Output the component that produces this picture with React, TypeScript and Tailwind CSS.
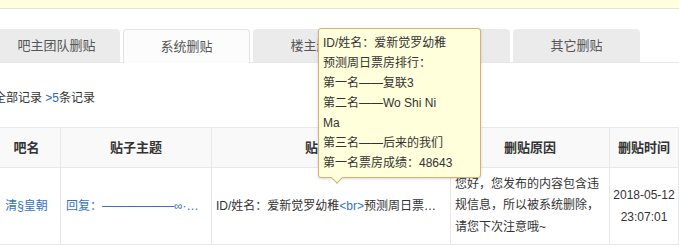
import React from 'react';

// tabs across the top; the first one is cut off by the left edge
const tabs = ['吧主团队删贴', '系统删贴', '楼主删贴', '吧务删贴', '其它删贴'];

const tipLines = [
  'ID/姓名：爱新觉罗幼稚',
  '预测周日票房排行：',
  '第一名——复联3',
  '第二名——Wo Shi Ni',
  'Ma',
  '第三名——后来的我们',
  '第一名票房成绩：48643',
];

const font = { fontFamily: '"Liberation Sans", "Noto Sans CJK SC", sans-serif' };

export default function App() {
  return (
    <div className="relative w-[679px] h-[246px] overflow-hidden bg-white text-[#333]" style={font}>
      <div className="h-[9px] bg-[#fffedd] border-b border-[#e3e3e3]" />

      {/* tabs */}
      <div className="mt-[20px] border-b border-[#e6e6e6]">
        <div className="flex gap-[3px] ml-[-7px]">
          {tabs.map((t, i) => (
            <div
              key={t}
              className={
                i === 1
                  ? 'w-[127px] h-[34px] -mb-px shrink-0 flex items-center justify-center rounded-t-[4px] border border-b-0 border-[#e3e3e3] bg-[#fcfcfc] text-[13px] text-[#555]'
                  : 'w-[127px] h-[33px] shrink-0 flex items-center justify-center rounded-t-[4px] bg-[#ebebeb] text-[13px] text-[#555]'
              }
            >
              {t}
            </div>
          ))}
        </div>
      </div>

      <div className="ml-[-6px] mt-[26px] text-[12px] leading-[18px]">
        全部记录 <span className="text-[#2d64b3]">&gt;5</span>条记录
      </div>

      {/* records table */}
      <table className="w-[726px] ml-[-8px] mt-[20px] border-collapse table-fixed text-[12px]">
        <colgroup>
          <col className="w-[68px]" />
          <col className="w-[151px]" />
          <col className="w-[239px]" />
          <col className="w-[159px]" />
          <col className="w-[69px]" />
          <col className="w-[40px]" />
        </colgroup>
        <thead>
          <tr className="h-[40px] bg-[#f9f9f9]">
            <th className="border border-[#e8e8e8] font-bold text-[13px]">吧名</th>
            <th className="border border-[#e8e8e8] font-bold text-[13px]">贴子主题</th>
            <th className="border border-[#e8e8e8] font-bold text-[13px]">贴子内容</th>
            <th className="border border-[#e8e8e8] font-bold text-[13px]">删贴原因</th>
            <th className="border border-[#e8e8e8] font-bold text-[13px]">删贴时间</th>
            <th className="border border-[#e8e8e8] font-bold text-[13px]">操作</th>
          </tr>
        </thead>
        <tbody>
          <tr className="h-[77px]">
            <td className="border border-[#e8e8e8] text-center align-middle">
              <a className="text-[#3473c2]">清§皇朝</a>
            </td>
            <td className="border border-[#e8e8e8] px-[5px] align-middle">
              <div className="truncate text-[#3473c2]">回复：——————∞·∞·∞·∞·∞</div>
            </td>
            <td className="border border-[#e8e8e8] px-[4px] align-middle">
              <div className="truncate">
                ID/姓名：爱新觉罗幼稚<span className="text-[#3473c2]">&lt;br&gt;</span>预测周日票房排行：第一名——复联3
              </div>
            </td>
            <td className="border border-[#e8e8e8] px-[4px] align-middle leading-[21.5px]">
              您好，您发布的内容包含违规信息，所以被系统删除，请您下次注意哦~
            </td>
            <td className="border border-[#e8e8e8] text-center align-middle leading-[22px]">
              2018-05-12
              <br />
              23:07:01
            </td>
            <td className="border border-[#e8e8e8]" />
          </tr>
        </tbody>
      </table>

      {/* hover tooltip over the tabs and table */}
      <div className="absolute left-[318px] top-[28px] w-[163px] rounded-[3px] border border-[#d2b27a] bg-[#ffffdb] px-[4px] py-[4px] text-[12px] leading-[20px] text-[#333] shadow-[0_1px_3px_rgba(0,0,0,0.15)]">
        {tipLines.map((l, i) => (
          <div key={i} className="whitespace-nowrap">
            {l}
          </div>
        ))}
        <div className="absolute left-[14px] bottom-[-5px] w-[8px] h-[8px] rotate-45 border-r border-b border-[#d2b27a] bg-[#ffffdb]" />
      </div>
    </div>
  );
}
